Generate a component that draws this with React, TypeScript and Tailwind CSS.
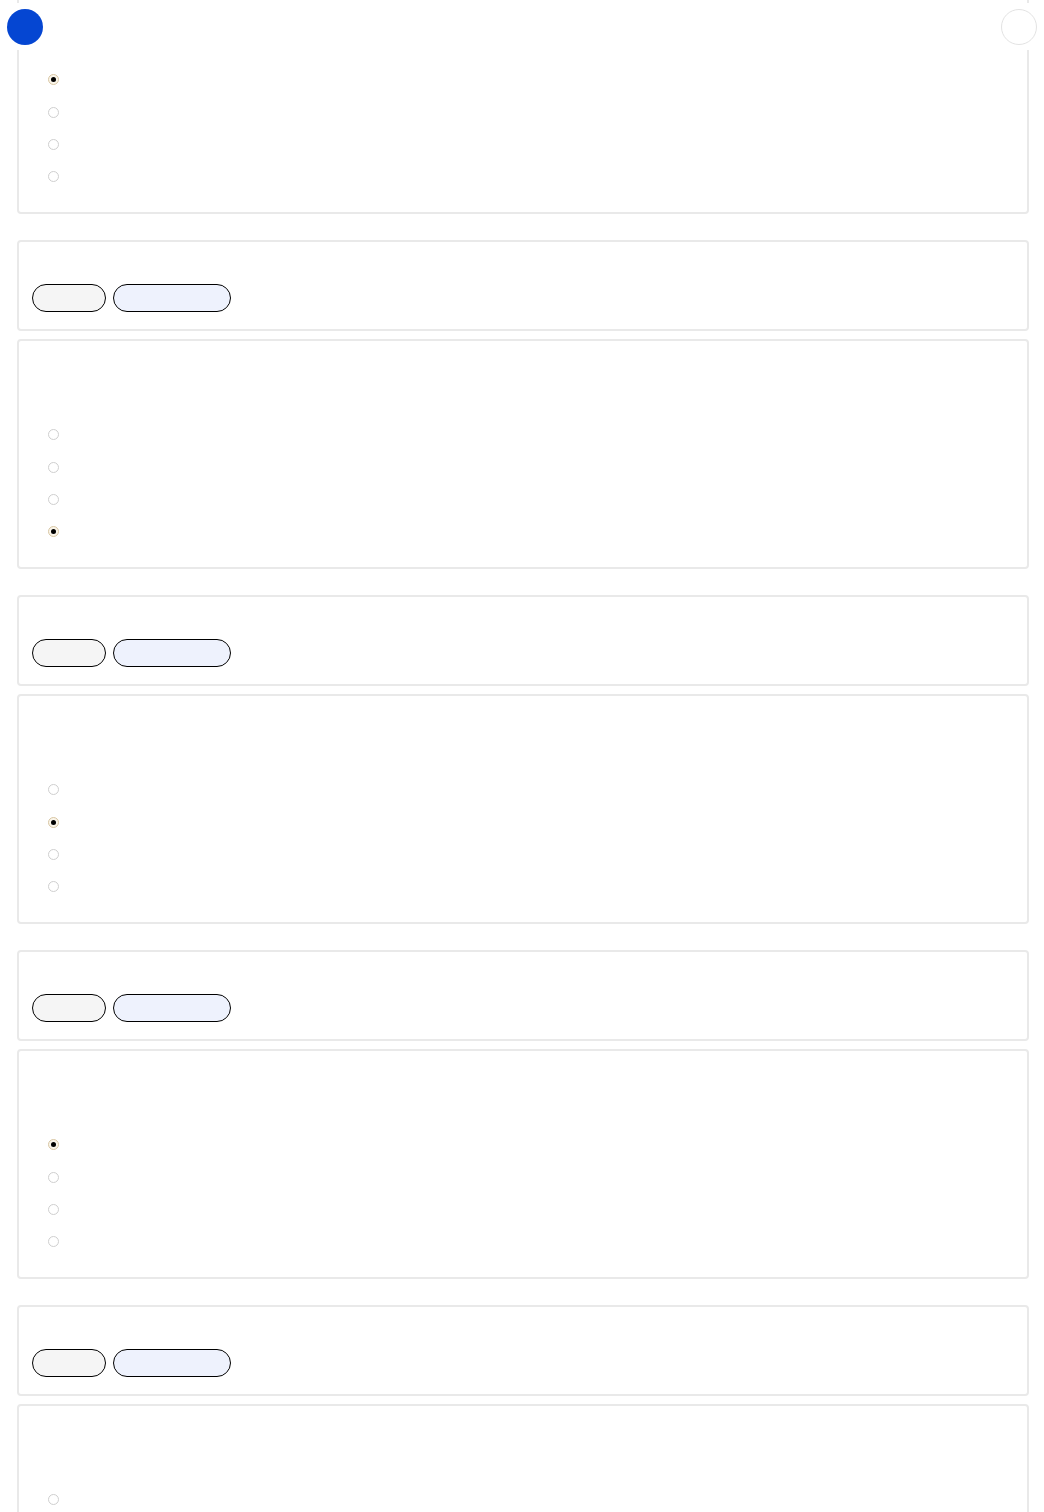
import React from "react";

function Radio({ checked }: { checked?: boolean }) {
  return checked ? (
    <span className="flex h-[11px] w-[11px] items-center justify-center rounded-full border border-[#d9c7a4] bg-[#faf5ea]">
      <span className="h-[5px] w-[5px] rounded-full bg-black" />
    </span>
  ) : (
    <span className="block h-[11px] w-[11px] rounded-full border border-[#cfcfcf] bg-white" />
  );
}

function BigCard({ checked, first }: { checked: number; first?: boolean }) {
  return (
    <div
      className={`flex h-[230px] flex-col rounded-[4px] border-2 border-[#e9e9e9] pt-[77.6px] pl-[29px] ${first ? "-mt-[16px]" : ""}`}
    >
      {[0, 1, 2, 3].map((i) => (
        <div key={i} className="flex h-[32.33px] shrink-0 items-center">
          <Radio checked={i === checked} />
        </div>
      ))}
    </div>
  );
}

function SmallCard() {
  return (
    <div className="flex h-[91px] gap-[7px] rounded-[4px] border-2 border-[#e9e9e9] pt-[42px] pl-[13px]">
      <button className="h-[28px] w-[74px] rounded-full border border-black bg-[#f5f5f5]" />
      <button className="h-[28px] w-[118px] rounded-full border border-black bg-[#eef2fd]" />
    </div>
  );
}

export default function App() {
  const checks = [3, 1, 0, 1];
  return (
    <div className="relative h-[1512px] w-[1044px] overflow-hidden bg-white font-['Liberation_Sans',sans-serif]">
      <div className="pl-[17px]">
        <div className="flex w-[1012px] flex-col">
          <BigCard checked={0} first />
          {checks.map((c, i) => (
            <div key={i} className="mt-[26px] flex flex-col gap-[8px]">
              <SmallCard />
              <BigCard checked={c} />
            </div>
          ))}
        </div>
      </div>
      <div className="absolute left-0 top-[3px] flex h-[47px] w-full items-center justify-between bg-white pl-[7px] pr-[7px]">
        <div className="h-[36px] w-[36px] rounded-full bg-[#0546d2]" />
        <div className="h-[36px] w-[36px] rounded-full border border-[#e3e3e3] bg-white" />
      </div>
    </div>
  );
}
